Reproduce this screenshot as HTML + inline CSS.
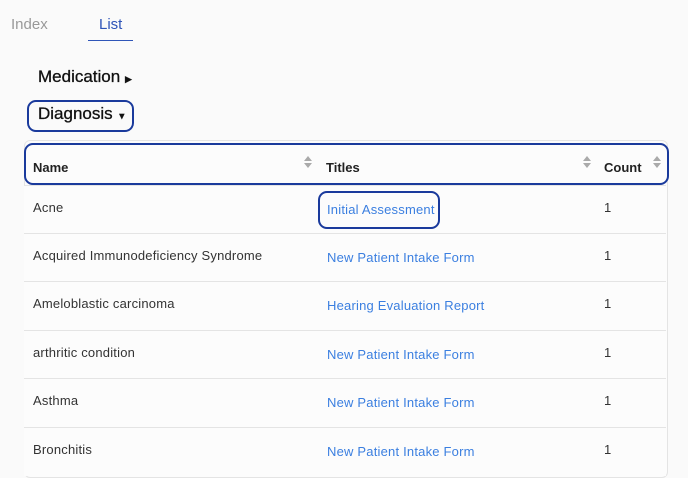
<!DOCTYPE html>
<html><head><style>
body{margin:0;width:688px;height:476px;background:#fafafa;font-family:"Liberation Sans",sans-serif;position:relative;overflow:hidden;color:#333}
.a{position:absolute;white-space:nowrap}
.row{position:absolute;left:24px;width:642px;height:48px;border-top:1px solid #e4e4e4;background:#fcfcfc}
.n{font-size:13px;color:#333;letter-spacing:0.2px}
.l{font-size:13px;color:#3b7fe0;letter-spacing:0.2px}
.s{position:absolute;width:0;height:0;border-left:4px solid transparent;border-right:4px solid transparent}
</style></head><body>
<div class="a" style="left:11px;top:16px;font-size:15px;color:#999">Index</div>
<div class="a" style="left:99px;top:16px;font-size:15px;color:#2f55b8">List</div>
<div class="a" style="left:88px;top:40px;width:45px;height:1px;background:#2f55b8"></div>
<div class="a" style="left:38px;top:67px;font-size:17px;color:#111;-webkit-text-stroke:0.3px #111">Medication <span style="font-size:9px">▶</span></div>
<div class="a" style="left:27px;top:100px;width:103px;height:28px;border:2px solid #1a3a9c;border-radius:9px"></div>
<div class="a" style="left:38px;top:104px;font-size:17px;color:#111;-webkit-text-stroke:0.3px #111">Diagnosis <span style="font-size:9px">▼</span></div>
<div class="a" style="left:24px;top:140px;width:642px;height:336px;border:1px solid #e4e4e4;border-radius:6px;background:#fcfcfc"></div>
<div class="a" style="left:24px;top:143px;width:641px;height:38px;border:2px solid #1a3a9c;border-radius:9px"></div>
<div class="a" style="left:33px;top:160px;font-size:13px;font-weight:bold;color:#222">Name</div>
<div class="a" style="left:326px;top:160px;font-size:13px;font-weight:bold;color:#222">Titles</div>
<div class="a" style="left:604px;top:160px;font-size:13px;font-weight:bold;color:#222">Count</div>
<div class="s" style="left:304px;top:156px;border-bottom:5px solid #aaa"></div><div class="s" style="left:304px;top:163px;border-top:5px solid #aaa"></div>
<div class="s" style="left:583px;top:156px;border-bottom:5px solid #aaa"></div><div class="s" style="left:583px;top:163px;border-top:5px solid #aaa"></div>
<div class="s" style="left:653px;top:156px;border-bottom:5px solid #aaa"></div><div class="s" style="left:653px;top:163px;border-top:5px solid #aaa"></div>

<div class="row" style="top:185px"><span class="a n" style="left:9px;top:14px">Acne</span><span class="a l" style="left:303px;top:16px">Initial Assessment</span><span class="a n" style="left:580px;top:14px">1</span></div>
<div class="a" style="left:318px;top:191px;width:118px;height:34px;border:2px solid #1a3a9c;border-radius:9px"></div>
<div class="row" style="top:233px"><span class="a n" style="left:9px;top:14px">Acquired Immunodeficiency Syndrome</span><span class="a l" style="left:303px;top:16px">New Patient Intake Form</span><span class="a n" style="left:580px;top:14px">1</span></div>
<div class="row" style="top:281px"><span class="a n" style="left:9px;top:14px">Ameloblastic carcinoma</span><span class="a l" style="left:303px;top:16px">Hearing Evaluation Report</span><span class="a n" style="left:580px;top:14px">1</span></div>
<div class="row" style="top:330px"><span class="a n" style="left:9px;top:14px">arthritic condition</span><span class="a l" style="left:303px;top:16px">New Patient Intake Form</span><span class="a n" style="left:580px;top:14px">1</span></div>
<div class="row" style="top:378px"><span class="a n" style="left:9px;top:14px">Asthma</span><span class="a l" style="left:303px;top:16px">New Patient Intake Form</span><span class="a n" style="left:580px;top:14px">1</span></div>
<div class="row" style="top:427px"><span class="a n" style="left:9px;top:14px">Bronchitis</span><span class="a l" style="left:303px;top:16px">New Patient Intake Form</span><span class="a n" style="left:580px;top:14px">1</span></div>
</body></html>
